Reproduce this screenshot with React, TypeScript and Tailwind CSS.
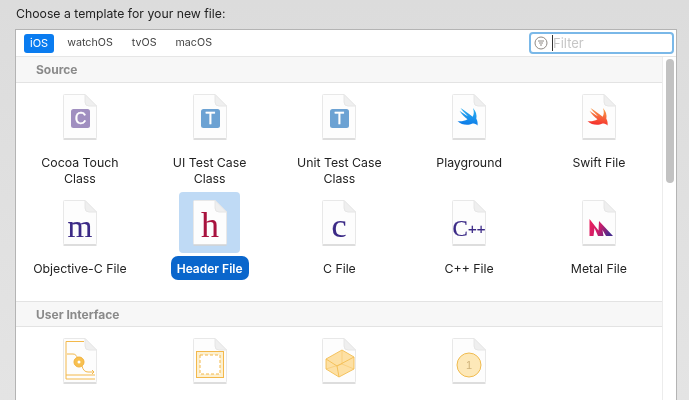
import React from "react";

function Doc({ children }: { children?: React.ReactNode }) {
  return (
    <svg width="36" height="46" viewBox="0 0 36 46" className="block">
      <path d="M1.500 1.500a1 1 0 0 1 1-1H23L34.500 12v31.500a1 1 0 0 1-1 1h-31a1 1 0 0 1-1-1z" fill="#fdfdfd" stroke="#e8e8e8" />
      <path d="M1.500 45.200h33" stroke="#d2d2d2" strokeWidth="1.200" />
      <path d="M23 .5V8a4 4 0 0 0 4 4h7.500z" fill="#efefef" stroke="#e6e6e6" />
      {children}
    </svg>
  );
}

function Badge({ letter, color }: { letter: string; color: string }) {
  return (
    <>
      <rect x="9" y="15" width="19" height="19" rx="2.500" fill={color} />
      <text x="18.500" y="30" textAnchor="middle" fontFamily="'Liberation Sans', sans-serif" fontSize="16" fill="#fff" stroke="#fff" strokeWidth="0.3">
        {letter}
      </text>
    </>
  );
}

function Serif({ letter, color, size }: { letter: string; color: string; size: number }) {
  return (
    <text x="18" y="37" textAnchor="middle" fontFamily="'Liberation Serif', serif" fontSize={size} fill={color} stroke={color} strokeWidth="0.1">
      {letter}
    </text>
  );
}

function Swift({ id, from, to }: { id: string; from: string; to: string }) {
  return (
    <>
      <defs>
        <linearGradient id={id} x1="0.6" y1="0" x2="0.4" y2="1">
          <stop offset="0" stopColor={from} />
          <stop offset="1" stopColor={to} />
        </linearGradient>
      </defs>
      <path
        d="M6.500 27C10.500 31 17 32 21.500 29.500c2 0 3.800.6 5 2 .4-2.500 0-4.800-1.200-6.800.9-3.700-.5-7.700-3.300-10.700 1.200 3.500 1 6.300-.3 8.800C18 19.800 13.500 16.500 9.500 14c2.200 3 5 5.800 7.500 8.300-3-1.700-6-3.700-8.500-5.600 2.200 3.300 5 6.300 8 8.500-3.500 2-7 2.500-10 1.800z"
        fill={`url(#${id})`}
      />
    </>
  );
}

const Metal = () => (
  <>
    <defs>
      <linearGradient id="metal" x1="0" y1="0" x2="1" y2="0.3">
        <stop offset="0" stopColor="#ee1f5c" />
        <stop offset="0.55" stopColor="#c81c6a" />
        <stop offset="1" stopColor="#4a2a8c" />
      </linearGradient>
    </defs>
    <path d="M8.500 19L17.500 30.500 18 21 32 36h-7l-3.500-6 1 6H17l-3.500-8-1 8H8.500z" fill="url(#metal)" />
  </>
);

const Storyboard = () => (
  <g fill="none" stroke="#f3b84a">
    <path d="M4 3.500H22M4 3.500V41M4 37H33M4 41H33" />
    <path d="M5 16h6c3 0 3 2 5 4M20 28c1 4 3 6 6 6h6M30 32l2 2-2 2" />
    <circle cx="17" cy="24" r="5" fill="#f7c050" stroke="#f3b23d" />
    <circle cx="17" cy="24" r="1.500" fill="#fff" stroke="none" />
  </g>
);

const Xib = () => (
  <g fill="none" stroke="#f3b84a">
    <rect x="4.500" y="13.500" width="27" height="26" fill="#fdf0d0" />
    <rect x="8" y="17" width="20" height="19" fill="#fff" strokeDasharray="3 2" />
  </g>
);

const Cube = () => (
  <g stroke="#f3bd52" strokeWidth="0.9">
    <path d="M5 21L21 12l12 7v12L18 39 5 31z" fill="#fde0a4" />
    <path d="M5 21l11 7 17-9M16 28l2 11" fill="none" />
    <path d="M21 12v14M5 31l16-5 12 5" fill="none" opacity="0.5" />
  </g>
);

const Asset = () => (
  <>
    <circle cx="18" cy="27" r="12" fill="#fde8b8" stroke="#f0bb4f" />
    <text x="18" y="31" textAnchor="middle" fontFamily="'Liberation Sans', sans-serif" fontSize="11" fill="#cfb27a">
      1
    </text>
  </>
);

function Item({ label, icon, selected }: { label: React.ReactNode; icon: React.ReactNode; selected?: boolean }) {
  return (
    <div className="flex flex-col items-center">
      <div className={`flex h-[61px] w-[61px] items-start justify-center rounded pt-2 ${selected ? "bg-[#bfdaf5]" : ""}`}>
        <Doc>{icon}</Doc>
      </div>
      <div
        className={`mt-[3px] rounded-[7px] px-[6px] pb-[3px] pt-[5px] text-center leading-4 ${
          selected ? "bg-[#0a66cc] text-[12px] font-semibold text-white" : "text-[12.3px] text-[#222]"
        }`}
      >
        {label}
      </div>
    </div>
  );
}

function Section({ title, first, children }: { title: string; first?: boolean; children: React.ReactNode }) {
  return (
    <>
      <div
        className={`flex h-[26px] items-center border-b border-[#e3e3e3] bg-[#f7f7f7] pl-5 text-[12px] font-bold text-[#8a8a8a] ${
          first ? "" : "border-t pt-px"
        }`}
      >
        {title}
      </div>
      <div className="-ml-px grid grid-cols-[repeat(5,129.75px)] auto-rows-[106px] pt-[3px]">{children}</div>
    </>
  );
}

export default function App() {
  const tabs = ["watchOS", "tvOS", "macOS"];

  return (
    <div className="h-[400px] w-[689px] overflow-hidden bg-gradient-to-b from-[#dcdcdc] to-[#e4e4e4] font-['Inter','Liberation_Sans',sans-serif] blur-[0.4px]">
      <div className="flex h-[29px] items-center pl-[16px] text-[12.25px] text-[#222]">Choose a template for your new file:</div>
      <div className="ml-[15px] h-[400px] w-[662px] border-x border-t border-[#b4b4b4] bg-white">
        {/* platform tabs and filter */}
        <div className="flex h-[27px] items-center border-b border-[#e6e6e6] pl-2 pr-[2px]">
          <span className="rounded-[3px] bg-[#0a7cf0] px-[6px] py-[3px] text-[11px] leading-[13px] text-white">iOS</span>
          <div className="ml-[7px] flex gap-[7px]">
            {tabs.map((tab) => (
              <span key={tab} className="px-[6px] text-[10.7px] text-[#444]">
                {tab}
              </span>
            ))}
          </div>
          <div className="ml-auto flex h-[22px] w-[145px] items-center rounded-[4px] border-2 border-[#7ab8e8] bg-white pl-[3px]">
            <svg width="14" height="14" viewBox="0 0 14 14" fill="none" stroke="#8f8a85" className="shrink-0">
              <circle cx="7" cy="7" r="6" />
              <path d="M4 5h6M5 7h4M6 9h2" />
            </svg>
            <span className="ml-1 h-[16px] w-px bg-[#333]" />
            <span className="pt-px text-[13px] text-[#c6c6c6]">Filter</span>
          </div>
        </div>

        <div className="flex">
          <div className="w-[646px]">
            <Section title="Source" first>
              <Item label={<>Cocoa Touch<br />Class</>} icon={<Badge letter="C" color="#a08fc0" />} />
              <Item label={<>UI Test Case<br />Class</>} icon={<Badge letter="T" color="#6ca2d3" />} />
              <Item label={<>Unit Test Case<br />Class</>} icon={<Badge letter="T" color="#6ca2d3" />} />
              <Item label="Playground" icon={<Swift id="swift-blue" from="#2cb0f0" to="#0a78e8" />} />
              <Item label="Swift File" icon={<Swift id="swift-red" from="#f8a04a" to="#f5282a" />} />
              <Item label="Objective-C File" icon={<Serif letter="m" color="#3b2a86" size={32} />} />
              <Item label="Header File" selected icon={<Serif letter="h" color="#a8123e" size={36} />} />
              <Item label="C File" icon={<Serif letter="c" color="#3b2a86" size={34} />} />
              <Item
                label="C++ File"
                icon={
                  <text x="18" y="36" textAnchor="middle" fontFamily="'Liberation Serif', serif" fontSize="23" fill="#3b2a86" stroke="#3b2a86" strokeWidth="0.2">
                    C<tspan fontSize="15" fontFamily="'Liberation Sans', sans-serif" dy="-2">++</tspan>
                  </text>
                }
              />
              <Item label="Metal File" icon={<Metal />} />
            </Section>
            <div className="h-[3px]" />
            <Section title="User Interface">
              <Item label="" icon={<Storyboard />} />
              <Item label="" icon={<Xib />} />
              <Item label="" icon={<Cube />} />
              <Item label="" icon={<Asset />} />
            </Section>
          </div>
          <div className="flex-1 border-l border-[#ececec] pl-[3px] pt-[2px]">
            <div className="h-[124px] w-2 rounded-full bg-[#c2c2c2]" />
          </div>
        </div>
      </div>
    </div>
  );
}
